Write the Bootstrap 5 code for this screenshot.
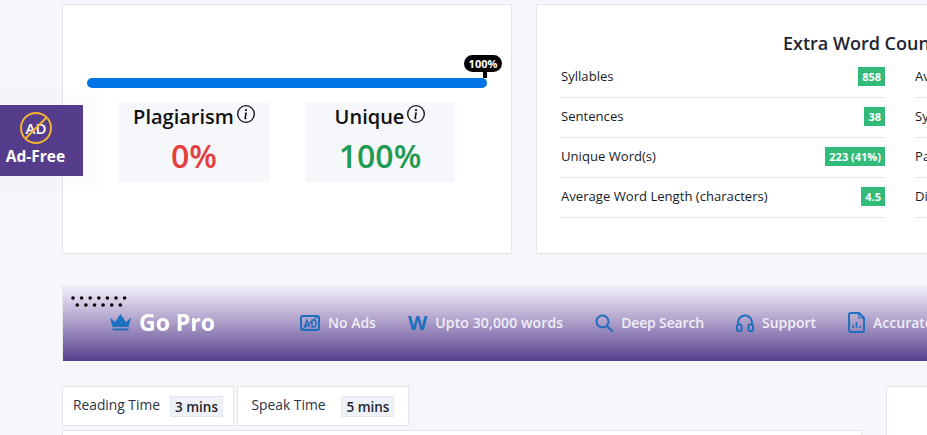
<!DOCTYPE html>
<html lang="en">
<head>
  <meta charset="UTF-8">
  <meta name="viewport" content="width=device-width, initial-scale=1">
  <title>Plagiarism Report</title>
  <link href="https://cdn.jsdelivr.net/npm/bootstrap@5.3.0/dist/css/bootstrap.min.css" rel="stylesheet">
  <style>
    html, body { height: 435px; overflow: hidden; }
    body {
      background: #f5f7fa;
      font-family: "Open Sans", "Noto Sans", sans-serif;
      color: #1e2530;
    }
    .page-wrap { width: 1202px; margin-left: 62px; padding-top: 4px; }
    .top-row { display: flex; gap: 24px; }
    .panel-box { background: #fff; border: 1px solid #e4e6ef; border-radius: 0; }
    .score-card { width: 450px; height: 250px; padding: 73px 24px 0; flex: none; }
    .words-card { width: 728px; height: 250px; padding: 26px 24px 0; flex: none; }

    .bar-wrap { position: relative; margin-bottom: 14px; }
    .bar-wrap .progress { height: 10px; border-radius: 5px; background: #e9ecef; }
    .bar-wrap .progress-bar { background: #0073e6; }
    .bar-tip {
      position: absolute; right: -15px; top: -23px; width: 38px; height: 17px;
      background: #000; color: #fff; border-radius: 9px;
      font-size: 11px; font-weight: 700; line-height: 17px; text-align: center;
    }
    .bar-tip::after {
      content: ""; position: absolute; left: 19px; top: 17px;
      width: 4px; height: 6px; background: #000;
    }
    .score-boxes { display: flex; gap: 36px; padding-left: 32px; }
    .score-box { width: 150px; height: 80px; background: #f5f7fa; text-align: center; padding-top: 1px; }
    .score-name { font-size: 20px; font-weight: 600; color: #111; line-height: 28px; display: flex; justify-content: center; align-items: flex-start; gap: 3px; }
    .score-name svg { margin-top: 2px; }
    .score-val { font-size: 32px; line-height: 44px; font-weight: 600; margin-top: 3px; }
    .val-red { color: #e53e3e; }
    .val-green { color: #1f9a52; }

    .words-title { font-size: 18px; font-weight: 600; text-align: center; line-height: 24px; margin: 0 80px 3px 0; color: #1e2530; }
    .words-cols { display: flex; gap: 30px; }
    .words-col { width: 324px; }
    .word-row {
      height: 40px; border-bottom: 1px solid #e4e6ef;
      display: flex; justify-content: space-between; align-items: center;
      font-size: 13.1px; font-weight: 500; padding-bottom: 2px; color: #151b26;
    }
    .word-num {
      background: #32bb78; color: #fff; font-size: 11px; font-weight: 700;
      height: 19px; line-height: 19px; padding: 0 4px;
    }

    .promo-bar {
      position: relative; height: 75px; margin-top: 32px; padding: 0 0 3px 47px;
      border: 1px solid #e4e6ef; border-bottom: 0;
      background: linear-gradient(180deg, #f1edf9 0%, #b0a2cb 45%, #57408f 100%);
      display: flex; align-items: center; white-space: nowrap;
    }
    .promo-dots { position: absolute; left: 8px; top: 9px; }
    .promo-title { font-size: 23px; font-weight: 700; color: #fff; margin-left: 8px; margin-right: 85px; }
    .promo-item { display: flex; align-items: center; gap: 8px; margin-right: 32px; color: #f1edf9; font-size: 14px; font-weight: 600; }
    .promo-w { font-size: 20px; font-weight: 700; color: #1f6fbf; line-height: 1; }
    .promo-wide { letter-spacing: .12px; }
    .promo-tight { letter-spacing: -.16px; }

    .bottom-row { display: flex; gap: 24px; margin-top: 25px; }
    .left-side { width: 800px; flex: none; }
    .right-side { flex: 1; height: 200px; }
    .time-tabs { display: flex; gap: 3px; margin-bottom: 4px; }
    .time-tab {
      width: 172px; height: 40px; font-size: 13.8px; color: #2b3445;
      display: flex; align-items: center; justify-content: center; gap: 10px;
    }
    .time-tab-wide { gap: 16px; }
    .time-tab > span:first-child { margin-top: -2px; }
    .time-val {
      background: #eef2f6; border: 1px solid #e4e9f0; font-size: 13.5px; font-weight: 600;
      height: 21px; line-height: 20px; padding: 0 4px; color: #1e2530;
    }
    .text-area-box { height: 100px; }

    .adfree-glow { position: absolute; left: 0; top: 90px; width: 97px; height: 100px; background: rgba(120, 140, 180, .025); }
    .adfree {
      position: absolute; left: 0; top: 105px; width: 83px; height: 71px; padding: 6px 12px 0 0;
      background: #563d8c; color: #fff; text-align: center;
    }
    .adfree svg { display: block; margin: 0 auto; }
    .adfree-label { font-size: 15.500px; font-weight: 700; line-height: 20px; margin: 1px -6px 0 -6px; white-space: nowrap; }
  </style>
</head>
<body>

<div class="adfree-glow"></div>

<div class="page-wrap">
  <div class="top-row">
    <div class="panel-box score-card">
      <div class="bar-wrap">
        <div class="progress">
          <div class="progress-bar" style="width: 100%"></div>
        </div>
        <div class="bar-tip">100%</div>
      </div>
      <div class="score-boxes">
        <div class="score-box">
          <div class="score-name"><span>Plagiarism</span>
            <svg width="18" height="18" viewBox="0 0 16 16" fill="#111"><path fill-rule="evenodd" d="M8 0a8 8 0 1 0 0 16A8 8 0 0 0 8 0zm0 1.200a6.800 6.800 0 1 1 0 13.600A6.800 6.800 0 0 1 8 1.200z"/><path d="m8.930 6.590-2.290.280-.080.380.450.080c.290.070.350.180.290.470l-.740 3.470c-.190.900.110 1.320.810 1.320.550 0 1.180-.250 1.470-.600l.090-.410c-.200.180-.500.250-.690.250-.270 0-.370-.190-.300-.530zM9 4.500a1 1 0 1 1-2 0 1 1 0 0 1 2 0z"/></svg>
          </div>
          <div class="score-val val-red">0%</div>
        </div>
        <div class="score-box">
          <div class="score-name"><span>Unique</span>
            <svg width="18" height="18" viewBox="0 0 16 16" fill="#111"><path fill-rule="evenodd" d="M8 0a8 8 0 1 0 0 16A8 8 0 0 0 8 0zm0 1.200a6.800 6.800 0 1 1 0 13.600A6.800 6.800 0 0 1 8 1.200z"/><path d="m8.930 6.590-2.290.280-.080.380.450.080c.290.070.350.180.290.470l-.740 3.470c-.190.900.110 1.320.810 1.320.550 0 1.180-.250 1.470-.600l.090-.410c-.200.180-.500.250-.690.250-.270 0-.370-.190-.300-.530zM9 4.500a1 1 0 1 1-2 0 1 1 0 0 1 2 0z"/></svg>
          </div>
          <div class="score-val val-green">100%</div>
        </div>
      </div>
    </div>

    <div class="panel-box words-card">
      <div class="words-title">Extra Word Count</div>
      <div class="words-cols">
        <div class="words-col">
          <div class="word-row"><span>Syllables</span><span class="word-num">858</span></div>
          <div class="word-row"><span>Sentences</span><span class="word-num">38</span></div>
          <div class="word-row"><span>Unique Word(s)</span><span class="word-num">223 (41%)</span></div>
          <div class="word-row"><span>Average Word Length (characters)</span><span class="word-num">4.5</span></div>
        </div>
        <div class="words-col">
          <div class="word-row"><span>Average Sentence Length</span><span class="word-num">12</span></div>
          <div class="word-row"><span>Syllables per Word</span><span class="word-num">1.6</span></div>
          <div class="word-row"><span>Paragraphs</span><span class="word-num">4</span></div>
          <div class="word-row"><span>Difficult Words</span><span class="word-num">96</span></div>
        </div>
      </div>
    </div>
  </div>

  <div class="promo-bar">
    <svg class="promo-dots" width="56" height="12" viewBox="0 0 56 12" fill="#000">
      <circle cx="2" cy="2" r="1.800"/><circle cx="10.600" cy="2" r="1.800"/><circle cx="19.200" cy="2" r="1.800"/><circle cx="27.800" cy="2" r="1.800"/><circle cx="36.400" cy="2" r="1.800"/><circle cx="45" cy="2" r="1.800"/><circle cx="53.600" cy="2" r="1.800"/>
      <circle cx="6.300" cy="9" r="1.800"/><circle cx="14.900" cy="9" r="1.800"/><circle cx="23.500" cy="9" r="1.800"/><circle cx="32.100" cy="9" r="1.800"/><circle cx="40.700" cy="9" r="1.800"/><circle cx="49.300" cy="9" r="1.800"/>
    </svg>
    <svg width="21" height="17" viewBox="0 0 21 17" fill="#1f6fbf"><path d="M0 3.500 5 8l5.500-8L16 8l5-4.500L18.500 13h-16z"/><rect x="2.500" y="14.500" width="16" height="2"/></svg>
    <span class="promo-title">Go Pro</span>
    <div class="promo-item">
      <svg width="20" height="16" viewBox="0 0 20 16" fill="none" stroke="#1f6fbf" stroke-width="2"><rect x="1" y="1" width="18" height="14" rx="2"/><path d="M4.500 12 7 5l2.500 7M5.500 10h3M12 5v7h1.500a2.500 2.500 0 0 0 2.500-3.500A2.500 2.500 0 0 0 13.500 5zM3 14 17 2" stroke-width="1.400"/></svg>
      <span>No Ads</span>
    </div>
    <div class="promo-item">
      <span class="promo-w">W</span>
      <span class="promo-wide">Upto 30,000 words</span>
    </div>
    <div class="promo-item">
      <svg width="18" height="18" viewBox="0 0 18 18" fill="none" stroke="#1f6fbf" stroke-width="2"><circle cx="7.500" cy="7.500" r="6"/><path d="m12 12 5 5" stroke-linecap="round"/></svg>
      <span class="promo-tight">Deep Search</span>
    </div>
    <div class="promo-item">
      <svg width="18" height="18" viewBox="0 0 18 18" fill="none" stroke="#1f6fbf" stroke-width="2"><path d="M2 11V8.500a7 7 0 0 1 14 0V11"/><rect x="1" y="10.500" width="4.500" height="6.500" rx="1.500"/><rect x="12.500" y="10.500" width="4.500" height="6.500" rx="1.500"/></svg>
      <span>Support</span>
    </div>
    <div class="promo-item">
      <svg width="17" height="21" viewBox="0 0 17 21" fill="none" stroke="#1f6fbf" stroke-width="2"><path d="M3 1h8l5 5v12a2 2 0 0 1-2 2H3a2 2 0 0 1-2-2V3a2 2 0 0 1 2-2z"/><path d="M11 1v5h5" stroke-width="1.200"/><path d="M5 16v-3M8.500 16v-6M12 16v-2" stroke-width="1.500"/></svg>
      <span>Accurate Report</span>
    </div>
  </div>

  <div class="bottom-row">
    <div class="left-side">
      <div class="time-tabs">
        <div class="panel-box time-tab"><span>Reading Time</span><span class="time-val">3 mins</span></div>
        <div class="panel-box time-tab time-tab-wide"><span>Speak Time</span><span class="time-val">5 mins</span></div>
      </div>
      <div class="panel-box text-area-box"></div>
    </div>
    <div class="panel-box right-side"></div>
  </div>
</div>

<div class="adfree">
  <svg width="34" height="34" viewBox="0 0 34 34" fill="none">
    <text x="17" y="23" text-anchor="middle" font-family="Open Sans, sans-serif" font-size="15" font-weight="600" fill="#fff">AD</text>
    <circle cx="17" cy="17" r="15" stroke="#f5b32e" stroke-width="2"/>
    <path d="M6.500 27.500 27.500 6.500" stroke="#f5b32e" stroke-width="2"/>
  </svg>
  <div class="adfree-label">Ad-Free</div>
</div>

</body>
</html>
